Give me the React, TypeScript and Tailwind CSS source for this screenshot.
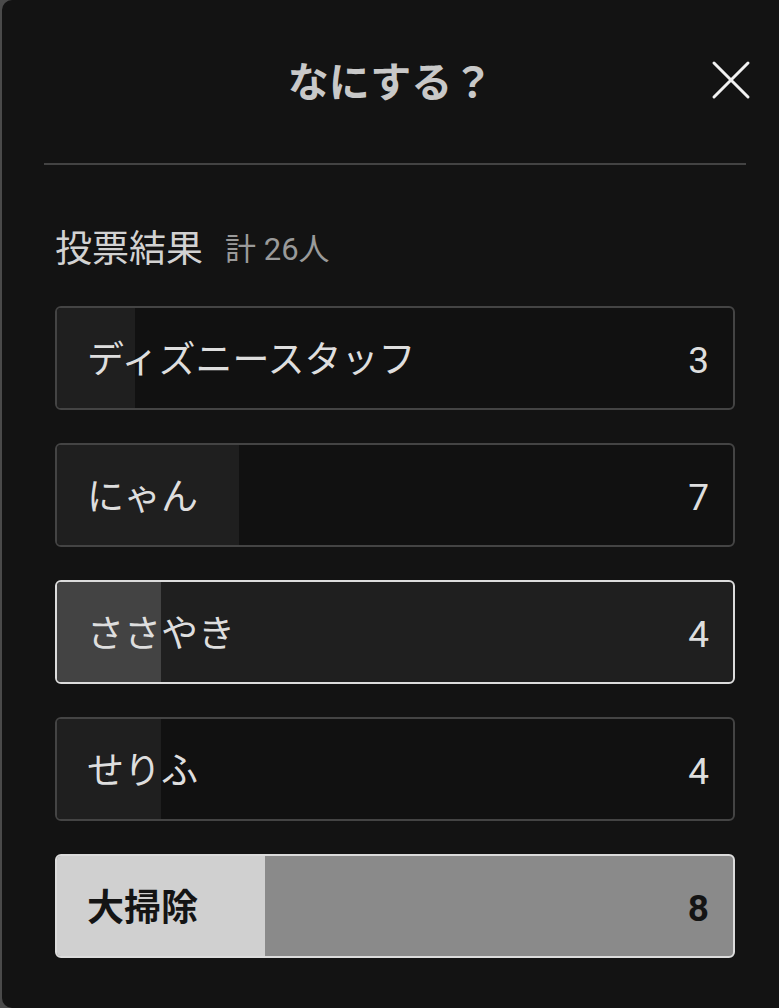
import React from "react";

type Choice = {
  label: string;
  count: number;
  /** The option the viewer voted for: light frame, lifted fill. */
  mine?: boolean;
  /** Most votes: inverted light tile, bold dark text. */
  top?: boolean;
};

const CHOICES: Choice[] = [
  { label: "ディズニースタッフ", count: 3 },
  { label: "にゃん", count: 7 },
  { label: "ささやき", count: 4, mine: true },
  { label: "せりふ", count: 4 },
  { label: "大掃除", count: 8, top: true },
];

const TOTAL = 26;

const FONT = "font-['Roboto','Noto_Sans_CJK_JP',sans-serif]";

const CloseIcon: React.FC = () => (
  <svg width="40" height="40" viewBox="0 0 40 40" fill="none" aria-hidden>
    <path
      d="M3 3 L37 37 M37 3 L3 37"
      stroke="#f2f2f2"
      strokeWidth="3"
      strokeLinecap="round"
    />
  </svg>
);

const ResultRow: React.FC<{ choice: Choice }> = ({ choice }) => {
  const pct = (choice.count / TOTAL) * 100;
  const frame = choice.top
    ? "border-[#dcdcdc] bg-[#8a8a8a]"
    : choice.mine
      ? "border-[#dcdcdc] bg-[#1f1f1f]"
      : "border-[#444444] bg-[#111111]";
  const fill = choice.top ? "bg-[#d0d0d0]" : choice.mine ? "bg-[#434343]" : "bg-[#1f1f1f]";
  const text = choice.top ? "font-bold text-[#141414]" : "text-[#dedede]";

  return (
    <div className={`relative h-[104px] overflow-hidden rounded-[6px] border-2 ${frame}`}>
      <div className={`absolute inset-y-0 left-0 ${fill}`} style={{ width: `${pct}%` }} />
      <div className={`relative flex h-full items-center justify-between pl-[30px] pr-[24px] pt-[6px] text-[37px] ${text}`}>
        <span>{choice.label}</span>
        <span>{choice.count}</span>
      </div>
    </div>
  );
};

export default function App() {
  return (
    <div className={`flex h-[1008px] w-[779px] overflow-hidden bg-[#4a4a4a] ${FONT}`}>
      <div className="ml-[2px] flex h-full flex-1 flex-col rounded-l-[10px] bg-[#131313]">
        <div className="relative flex h-[163px] items-center justify-center pt-[4px]">
          <h1 className="text-[41px] font-bold leading-none text-[#c8c8c8]">なにする？</h1>
          <button type="button" className="absolute right-[28px] top-[60px]" tabIndex={-1}>
            <CloseIcon />
          </button>
        </div>
        <div className="ml-[42px] h-[2px] w-[702px] bg-[#434343]" />

        <div className="ml-[53px] w-[680px]">
          <div className="mt-[60px] flex h-[48px] items-center pt-[2px]">
            <span className="text-[37px] text-[#d2d2d2]">投票結果</span>
            <span className="ml-[22px] text-[31px] text-[#9a9a9a]">計 {TOTAL}人</span>
          </div>
          <div className="mt-[33px] flex flex-col gap-[33px]">
            {CHOICES.map((c) => (
              <ResultRow key={c.label} choice={c} />
            ))}
          </div>
        </div>
      </div>
    </div>
  );
}
